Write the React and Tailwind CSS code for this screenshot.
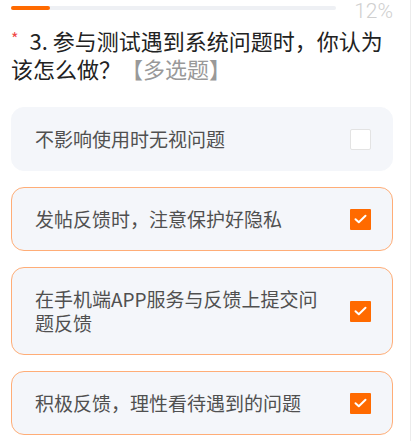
import React from "react";

const options = [
  { text: "不影响使用时无视问题", checked: false },
  { text: "发帖反馈时，注意保护好隐私", checked: true },
  { text: "在手机端APP服务与反馈上提交问题反馈", checked: true },
  { text: "积极反馈，理性看待遇到的问题", checked: true },
];

function Check({ checked }) {
  if (!checked) {
    return <div className="w-[21px] h-[21px] shrink-0 bg-white border border-[#e3e3e3] rounded-[2px]" />;
  }
  return (
    <div className="w-[21px] h-[21px] shrink-0 bg-[#ff6a00] rounded-[1px] flex items-center justify-center">
      <svg width="13" height="10" viewBox="0 0 13 10" fill="none">
        <path d="M1.5 5.2 L4.8 8.2 L11.5 1.8" stroke="white" strokeWidth="2" strokeLinecap="round" strokeLinejoin="round" />
      </svg>
    </div>
  );
}

export default function App() {
  return (
    <div
      className="w-[414px] h-[441px] bg-white overflow-hidden relative"
      style={{ fontFamily: '"Noto Sans CJK SC", "Noto Sans", sans-serif' }}
    >
      <div className="absolute top-0 bottom-0 left-[410px] w-px bg-[#ececec]" />
      <div className="pl-[11px] pr-[21px]">
        <div className="flex items-start h-[24px]">
          <div className="relative w-[325px] h-[4px] mt-[6px] bg-[#eef0f4] rounded-full">
            <div className="absolute left-0 top-0 h-[4px] w-[39px] bg-[#ff6a00] rounded-full" />
          </div>
          <div
            className="ml-auto text-[21px] leading-[22px] text-[#cfcfcf] font-light"
            style={{ fontFamily: '"Roboto", "Noto Sans", sans-serif' }}
          >
            12%
          </div>
        </div>
        <div className="text-[22px] leading-[28px] text-[#222] pt-[2px]">
          <span className="text-[#f04848] text-[16px] align-top mr-[11px] relative top-[-2px]">*</span>
          <span>3. 参与测试遇到系统问题时，你认为该怎么做？</span>
          <span className="text-[#999]">【多选题】</span>
        </div>
        <div className="mt-[25px] flex flex-col gap-[16px]">
          {options.map((o) => (
            <div
              key={o.text}
              className={
                "flex items-center rounded-[13px] bg-[#f4f6fa] pl-[23px] pr-[21px] py-[19px] border " +
                (o.checked ? "border-[#ffad77]" : "border-[#f4f6fa]")
              }
            >
              <div className="flex-1 text-[19px] leading-[24px] text-[#505050] pr-[20px]">{o.text}</div>
              <Check checked={o.checked} />
            </div>
          ))}
        </div>
      </div>
    </div>
  );
}
